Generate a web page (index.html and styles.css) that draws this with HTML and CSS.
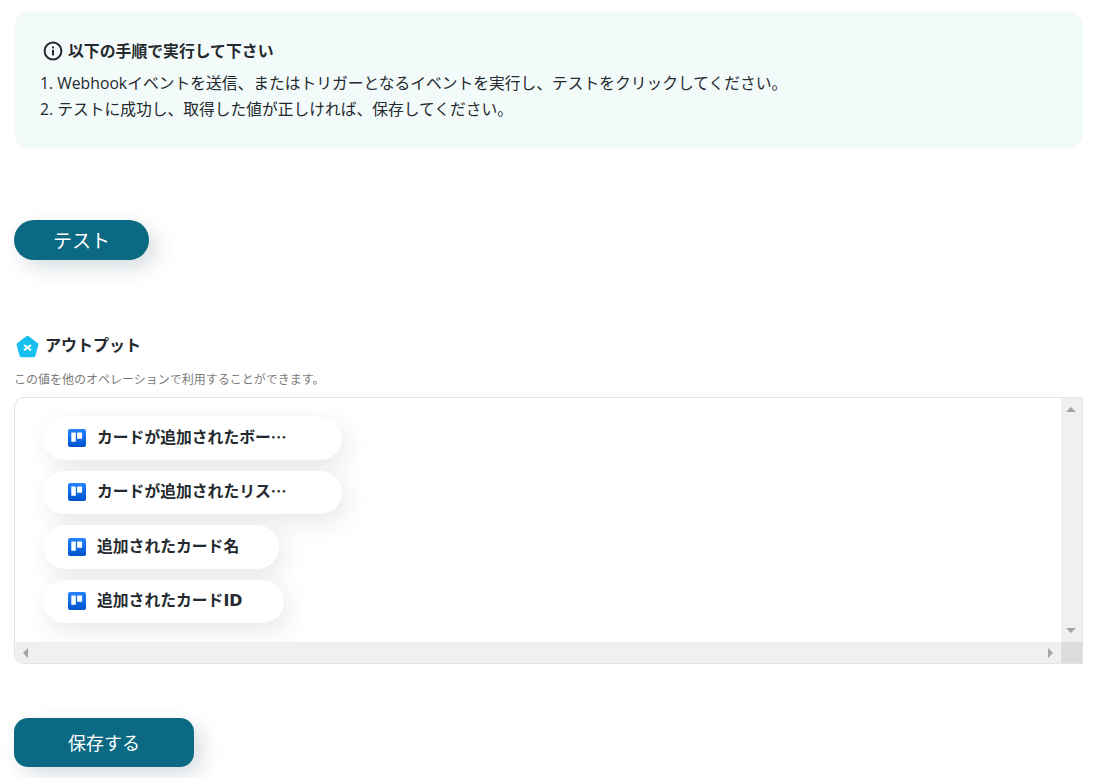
FILE: index.html
```html
<!DOCTYPE html>
<html lang="ja">
<head>
<meta charset="utf-8">
<title>テスト</title>
<link rel="stylesheet" href="styles.css">
</head>
<body>
<main class="page">
  <section class="notice">
    <h2 class="notice-title">
      <svg class="info-icon" viewBox="0 0 20 20" width="20" height="20" aria-hidden="true"><circle cx="10" cy="10" r="8.4" fill="none" stroke="#24292e" stroke-width="2"/><rect x="9" y="8.800" width="2" height="5.600" fill="#24292e"/><rect x="9" y="5.400" width="2" height="2" fill="#24292e"/></svg>
      以下の手順で実行して下さい
    </h2>
    <ol class="notice-list">
      <li>1. Webhookイベントを送信、またはトリガーとなるイベントを実行し、テストをクリックしてください。</li>
      <li>2. テストに成功し、取得した値が正しければ、保存してください。</li>
    </ol>
  </section>

  <button class="btn btn-test" type="button">テスト</button>

  <section class="output">
    <h3 class="output-title">
      <svg class="x-icon" viewBox="0 0 23 24" width="23" height="24" aria-hidden="true"><path d="M11.500 3.200 21 10.400 17.800 21.800H5.200L2 10.400Z" fill="#17bfee" stroke="#17bfee" stroke-width="3" stroke-linejoin="round"/><path d="M8 11l7 5.200M15 11l-7 5.200" stroke="#fff" stroke-width="1.900" fill="none"/></svg>
      <span class="output-label">アウトプット</span>
    </h3>
    <p class="output-desc">この値を他のオペレーションで利用することができます。</p>
    <div class="box">
      <div class="box-content">
        <div class="pill pill-wide"><svg class="trello" viewBox="0 0 18 18" width="18" height="18" aria-hidden="true"><use href="#trello"/></svg><span>カードが追加されたボー…</span></div>
        <div class="pill pill-wide"><svg class="trello" viewBox="0 0 18 18" width="18" height="18" aria-hidden="true"><use href="#trello"/></svg><span>カードが追加されたリス…</span></div>
        <div class="pill pill-name"><svg class="trello" viewBox="0 0 18 18" width="18" height="18" aria-hidden="true"><use href="#trello"/></svg><span>追加されたカード名</span></div>
        <div class="pill pill-id"><svg class="trello" viewBox="0 0 18 18" width="18" height="18" aria-hidden="true"><use href="#trello"/></svg><span>追加されたカード<b class="latin">ID</b></span></div>
      </div>
      <div class="vbar"><i class="tri tri-up"></i><i class="tri tri-down"></i></div>
      <div class="hbar"><i class="tri tri-left"></i><i class="tri tri-right"></i></div>
      <div class="corner"></div>
    </div>
  </section>

  <button class="btn btn-save" type="button">保存する</button>
</main>
<svg class="defs" width="0" height="0" aria-hidden="true">
  <defs>
    <linearGradient id="tg" x1="0" y1="0" x2="0" y2="1"><stop offset="0" stop-color="#2684ff"/><stop offset="1" stop-color="#0052cc"/></linearGradient>
    <symbol id="trello" viewBox="0 0 18 18">
      <rect width="18" height="18" rx="2" fill="url(#tg)"/>
      <rect x="3.300" y="3.400" width="4.500" height="9.400" rx=".5" fill="#fff"/>
      <rect x="9.100" y="3.400" width="5" height="6.300" rx=".5" fill="#fff"/>
    </symbol>
  </defs>
</svg>
</body>
</html>
```
FILE: styles.css
```css
* { box-sizing: border-box; }
html, body { margin: 0; padding: 0; background: #fff; }
body {
  font-family: "Noto Sans CJK JP", "Open Sans", sans-serif;
  color: #24292e;
  overflow: hidden;
  height: 778px;
}
.page {
  padding: 12px 14px 0;
  display: flex;
  flex-direction: column;
  align-items: flex-start;
}
.notice {
  width: 1069px;
  height: 136px;
  background: #f3fbfa;
  border-radius: 14px;
  padding: 28px 27px 0;
}
.notice-title {
  margin: 0;
  display: flex;
  align-items: center;
  gap: 5px;
  height: 22px;
  font-size: 15.850px;
  font-weight: 700;
  line-height: 22px;
}
.info-icon { margin-left: 2px; flex: none; }
.notice-list {
  list-style: none;
  margin: 8px 0 0 -1px;
  padding: 0;
  font-size: 15.750px;
  line-height: 26px;
  font-family: "Open Sans", "Noto Sans CJK JP", sans-serif;
}
.btn {
  display: block;
  border: 0;
  background: #0b6983;
  color: #fff;
  font-family: inherit;
  box-shadow: 8px 8px 20px rgba(30, 60, 80, .17);
}
.btn-test {
  width: 135px;
  height: 40px;
  border-radius: 20px;
  margin-top: 72px;
  padding: 0 0 2px;
  font-size: 19px;
}
.output { margin-top: 73px; width: 1069px; }
.output-title {
  margin: 0;
  display: flex;
  align-items: center;
  gap: 6px;
  height: 24px;
  font-size: 16px;
  font-weight: 700;
  line-height: 24px;
}
.output-label { margin-bottom: 3px; }
.x-icon { margin: 2px 0 0 2px; flex: none; }
.output-desc {
  margin: 14px 0 0;
  height: 15px;
  font-size: 12px;
  line-height: 15px;
  color: #7b7b7b;
}
.box {
  margin-top: 11px;
  height: 267px;
  border: 1px solid #e3e3e3;
  border-radius: 10px 0 0 10px;
  display: grid;
  grid-template-columns: 1fr 21px;
  grid-template-rows: 244px 21px;
  overflow: hidden;
}
.box-content {
  padding: 19px 28px 0;
  display: flex;
  flex-direction: column;
  align-items: flex-start;
  gap: 11px;
}
.pill {
  height: 43px;
  border-radius: 22px;
  background: #fff;
  box-shadow: 5px 8px 24px rgba(40, 50, 60, .11);
  display: flex;
  align-items: center;
  padding-left: 25px;
  gap: 11px;
  font-size: 15.800px;
  font-weight: 700;
  white-space: nowrap;
}
.pill span { margin-bottom: 4px; }
.latin { font-family: "DejaVu Sans", sans-serif; font-weight: 700; }
.pill-wide { width: 299px; }
.pill-name { width: 236px; height: 44px; margin-bottom: -1px; }
.pill-id { width: 241px; margin-top: 1px; }
.trello { flex: none; margin-bottom: 1px; }
.vbar {
  background: #f0f0f0;
  position: relative;
}
.hbar {
  background: #f0f0f0;
  position: relative;
}
.corner { background: #dcdcdc; }
.tri {
  position: absolute;
  width: 0;
  height: 0;
  border-style: solid;
  border-color: transparent;
}
.tri-up { left: 5px; top: 9px; border-width: 0 5px 5px; border-bottom-color: #a3a3a3; }
.tri-down { left: 5px; bottom: 9px; border-width: 5px 5px 0; border-top-color: #a3a3a3; }
.tri-left { left: 8px; top: 6px; border-width: 5px 5px 5px 0; border-right-color: #a3a3a3; }
.tri-right { right: 8px; top: 6px; border-width: 5px 0 5px 5px; border-left-color: #a3a3a3; }
.btn-save {
  width: 180px;
  height: 49px;
  border-radius: 14px;
  margin-top: 54px;
  padding: 0 0 2px;
  font-size: 18px;
}
.defs { position: absolute; }
```
